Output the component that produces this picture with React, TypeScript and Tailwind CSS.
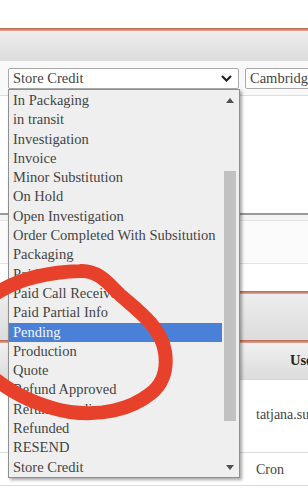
import React from 'react';

const options = [
  'In Packaging',
  'in transit',
  'Investigation',
  'Invoice',
  'Minor Substitution',
  'On Hold',
  'Open Investigation',
  'Order Completed With Subsitution',
  'Packaging',
  'Paid',
  'Paid Call Received',
  'Paid Partial Info',
  'Pending',
  'Production',
  'Quote',
  'Refund Approved',
  'Refund Pending',
  'Refunded',
  'RESEND',
  'Store Credit',
];

const Arrow = ({ up }: { up?: boolean }) => (
  <svg width="8" height="5" viewBox="0 0 8 5">
    <polygon points={up ? '0,5 4,0 8,5' : '0,0 8,0 4,5'} fill="#505050" />
  </svg>
);

const App: React.FC = () => {
  return (
    <div className="relative w-[308px] h-[490px] overflow-hidden bg-white font-['Liberation_Serif',serif] text-[14.5px] text-[#444]">
      <div className="h-[28px]" />
      <div className="h-[3px] bg-gradient-to-b from-[#b8604f] to-[#e3a99b]" />
      <div className="h-[30px] bg-gradient-to-b from-[#eeeeee] to-[#dbdbdb]" />

      <div className="flex gap-[6px] bg-[#f9f9f9] pl-[8px] pt-[7px] pb-[6px]">
        <div className="flex items-center justify-between w-[231px] h-[21px] shrink-0 rounded-[2px] border border-[#aaa] bg-white pl-[4px] pr-[6px]">
          <span>Store Credit</span>
          <svg width="11" height="7" viewBox="0 0 11 7">
            <polyline points="1,1 5.5,5.5 10,1" fill="none" stroke="#222" strokeWidth="2.2" />
          </svg>
        </div>
        <div className="flex items-center w-[120px] h-[21px] shrink-0 rounded-[2px] border border-[#aaa] bg-white pl-[4px] whitespace-nowrap">
          Cambridge
        </div>
      </div>

      <div className="h-[120px] border-t border-[#ddd] border-b-2 border-b-[#999] bg-white" />
      <div className="h-[6px] bg-[#f4f4f4] border-b border-[#e3e3e3]" />
      <div className="h-[43px] bg-[#fbfbfb] border-b border-[#e3e3e3]" />
      <div className="h-[27px] bg-white" />
      <div className="h-[3px] bg-gradient-to-b from-[#b8604f] to-[#e3a99b]" />
      <div className="h-[46px] bg-gradient-to-b from-[#eeeeee] to-[#dcdcdc]" />
      <div className="h-[3px] bg-gradient-to-b from-[#b8604f] to-[#e3a99b]" />

      <div className="flex h-[37px] bg-gradient-to-b from-[#f0f0f0] to-[#dcdcdc] border-b border-[#d6d6d6]">
        <div className="w-[248px] shrink-0" />
        <div className="flex items-center pl-[42px] font-bold text-[#222] whitespace-nowrap">User</div>
      </div>
      <div className="flex h-[73px] border-b border-[#ddd]">
        <div className="w-[248px] shrink-0" />
        <div className="flex items-center pl-[8px] pb-[4px] text-[14px] whitespace-nowrap">tatjana.summers</div>
      </div>
      <div className="flex h-[33px] border-b border-[#ddd]">
        <div className="w-[248px] shrink-0" />
        <div className="flex items-center pl-[8px] text-[14px] whitespace-nowrap">Cron</div>
      </div>

      {/* open select list */}
      <div className="absolute left-[8px] top-[89px] flex w-[232px] h-[389px] border border-[#8f8f8f] bg-[#efefef] shadow-[2px_2px_3px_rgba(0,0,0,0.35)]">
        <div className="flex-1 pt-[1px]">
          {options.map((o) => (
            <div
              key={o}
              className={
                o === 'Pending'
                  ? 'h-[19.3px] leading-[19.3px] pl-[4px] bg-[#4a80d8] text-[#f4f7ff] whitespace-nowrap'
                  : 'h-[19.3px] leading-[19.3px] pl-[4px] whitespace-nowrap'
              }
            >
              {o}
            </div>
          ))}
        </div>
        <div className="flex flex-col items-center w-[16px] mr-[1px]">
          <div className="flex items-center justify-center h-[18px] pt-[2px]">
            <Arrow up />
          </div>
          <div className="flex-1 flex justify-center">
            <div className="mt-[63px] w-[12px] h-[250px] bg-[#c1c1c1]" />
          </div>
          <div className="flex items-center justify-center h-[18px] pb-[2px]">
            <Arrow />
          </div>
        </div>
      </div>

      {/* red annotation circle */}
      <svg className="absolute inset-0 pointer-events-none" width="308" height="490" viewBox="0 0 308 490">
        <path
          d="M -30 335 C -30 297, 20 273, 80 271 C 98 270, 108 283, 118 293 C 133 307, 161 325, 165 352 C 168 372, 161 386, 150 394 C 130 410, 100 416, 70 412 C 30 406, -30 375, -30 335 Z"
          fill="none"
          stroke="#e8412b"
          strokeWidth="14"
        />
      </svg>
    </div>
  );
};

export default App;
